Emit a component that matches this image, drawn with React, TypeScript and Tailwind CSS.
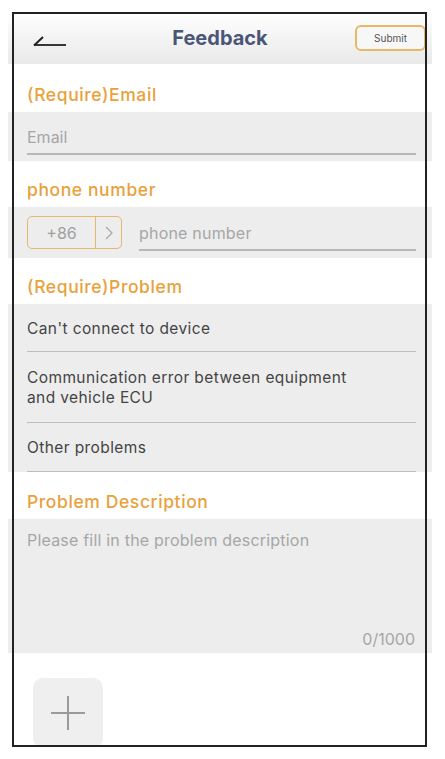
const problems = [
  ["Can't connect to device"],
  ["Communication error between equipment", "and vehicle ECU"],
  ["Other problems"],
];

function Label({ text, h }: { text: string; h: string }) {
  return (
    <div className={`${h} flex items-end px-[19px] pb-[6px] bg-white`}>
      <span className="text-[17.5px] leading-[22px] font-medium text-[#e9a13b] tracking-[0.6px]">
        {text}
      </span>
    </div>
  );
}

export default function App() {
  return (
    <div
      className="relative h-[759px] bg-white overflow-hidden"
      style={{ fontFamily: "Inter, 'Liberation Sans', sans-serif" }}
    >
      <div className="ml-[8px] mt-[12px] w-[424px] h-[733px] overflow-hidden">
        {/* Header */}
        <div className="h-[52px] bg-gradient-to-b from-white to-[#e9e9e9] flex items-center relative">
          <div className="w-[100px] pl-[25px] pt-[6px]">
            <svg width="34" height="12" viewBox="0 0 34 12">
              <path d="M1 10 L33 10" stroke="#222" strokeWidth="1.8" fill="none" />
              <path d="M1 10.5 L10 2" stroke="#222" strokeWidth="2" fill="none" />
            </svg>
          </div>
          <div className="flex-1 text-center text-[20px] font-bold text-[#4b5577]">Feedback</div>
          <div className="w-[100px] flex justify-end pr-[6px]">
            <button className="w-[71px] h-[26px] rounded-[6px] border-2 border-[#e6b867] bg-[#f7f7f7] text-[10px] text-[#555]">
              Submit
            </button>
          </div>
        </div>

        <Label text="(Require)Email" h="h-[48px]" />
        <div className="h-[49px] bg-[#ededed] px-[19px] pr-[16px] pt-[15px]">
          <div className="border-b-2 border-[#b8b8b8] pb-[6px] text-[16px] leading-[20px] text-[#a6a6a6]">
            Email
          </div>
        </div>

        <Label text="phone number" h="h-[46px]" />
        <div className="h-[51px] bg-[#ededed] pl-[19px] pr-[16px] pt-[9px] flex gap-[17px]">
          <div className="flex h-[33px] w-[95px] rounded-[5px] border border-[#e6b867]">
            <div className="w-[68px] flex items-center justify-center text-[16px] text-[#a0a0a0] border-r border-[#e6b867]">
              +86
            </div>
            <div className="flex-1 flex items-center justify-center">
              <svg width="8" height="14" viewBox="0 0 8 14">
                <path d="M1 1 L7 7 L1 13" stroke="#a8a8a8" strokeWidth="1.3" fill="none" />
              </svg>
            </div>
          </div>
          <div className="flex-1 h-[35px] border-b-2 border-[#b8b8b8] flex items-center text-[16px] tracking-[0.2px] text-[#a6a6a6]">
            phone number
          </div>
        </div>

        <Label text="(Require)Problem" h="h-[46px]" />
        <div className="bg-[#ededed] px-[19px] pr-[16px]">
          {problems.map((lines, i) => (
            <div
              key={i}
              className={`border-b border-[#bdbdbd] text-[15.5px] leading-[20px] tracking-[0.4px] text-[#444] ${
                lines.length > 1 ? "h-[71px] pt-[16px]" : i === 0 ? "h-[48px] pt-[15px]" : "h-[49px] pt-[15px]"
              }`}
            >
              {lines.map((l) => (
                <div key={l}>{l}</div>
              ))}
            </div>
          ))}
        </div>

        <Label text="Problem Description" h="h-[47px]" />
        <div className="h-[134px] bg-[#ededed] pl-[19px] pr-[17px] pt-[11px] flex flex-col">
          <div className="text-[16px] leading-[20px] tracking-[0.2px] text-[#a6a6a6]">
            Please fill in the problem description
          </div>
          <div className="mt-auto mb-[4px] text-right text-[16px] leading-[20px] text-[#a6a6a6]">0/1000</div>
        </div>

        <div className="pl-[25px] pt-[25px]">
          <div className="w-[70px] h-[70px] rounded-[10px] bg-[#efefef] flex items-center justify-center">
            <svg width="34" height="34" viewBox="0 0 34 34">
              <path d="M17 0 V34 M0 17 H34" stroke="#9a9a9a" strokeWidth="2" fill="none" />
            </svg>
          </div>
        </div>
      </div>
      <div className="pointer-events-none absolute left-[12px] top-[12px] w-[415px] h-[735px] border-2 border-[#222]" />
    </div>
  );
}
